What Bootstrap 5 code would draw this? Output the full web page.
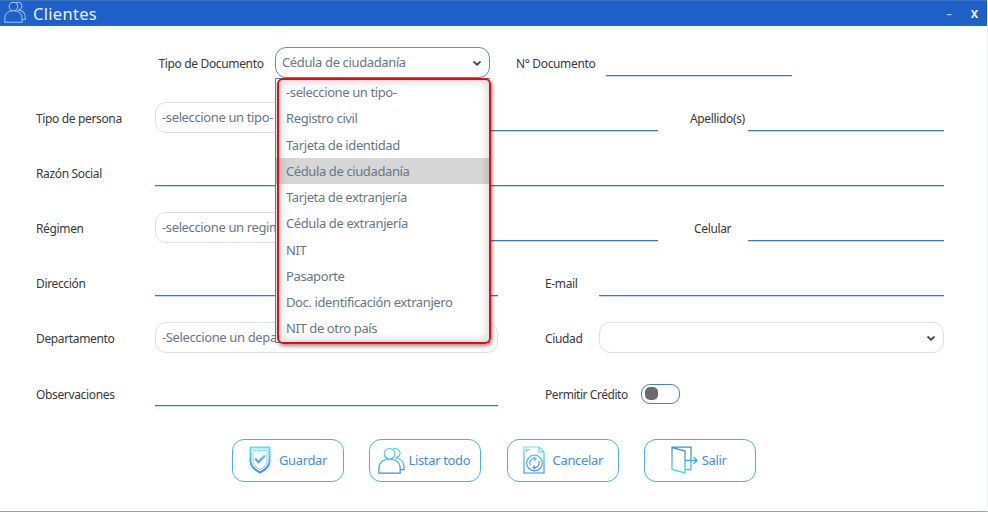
<!DOCTYPE html>
<html lang="es">
<head>
<meta charset="utf-8">
<title>Clientes</title>
<meta name="viewport" content="width=device-width, initial-scale=1">
<link href="https://cdn.jsdelivr.net/npm/bootstrap@5.3.0/dist/css/bootstrap.min.css" rel="stylesheet">
<style>
body{font-family:"Noto Sans","Open Sans",sans-serif;background:#fff;color:#222;overflow:hidden}
.win{width:988px;height:512px;border-right:1px solid #eef0f4;border-bottom:1.5px solid #8ba3d8}
.titlebar{height:26px;background:#1f5fc8;border-top:1px solid #3f6fc0;border-bottom:1px solid #3c66a8;color:#e9f2ff;padding:0 9px 0 4px}
.titlebar h1{font-size:16.5px;line-height:25px;letter-spacing:.3px;margin:0 0 0 7px;font-weight:400}
.winbtn{font:bold 11px/24px "Noto Sans",sans-serif;padding:0;border:0;background:none;color:#f2f7ff}
.winbtn.min{color:#a9c4ee;padding:1px 3px 0 0}
.form-area{padding:21px 43px 0 36px}
.line{height:31px;margin-bottom:24.1px;position:relative}
.lbl{font-size:12px;line-height:31px;padding-top:1px;white-space:nowrap;flex:none;color:#383838;letter-spacing:-.35px}
.w-lbl{width:119px}
.lbl-doc{width:239px;padding-left:122.5px}
.lbl-num{width:116px;padding-left:26px}
.lbl-ap{width:58px}.lbl-cel{width:54px}
.lbl-mid{width:101px;padding-left:47px}
.lbl-cred{width:143px;padding-left:47px;letter-spacing:-.45px}
.uline{border:0;border-bottom:1px solid #4079b0;box-shadow:0 1px 0 #c4dcf0;height:28.5px;padding:0;border-radius:0;background:none;outline:0;flex:none;min-width:0}
.sel{height:31px;border:1px solid #dbe2e6;border-radius:11px;padding:0 7px 0 6px;color:#697785;font-size:13px;letter-spacing:-.37px;line-height:29px;white-space:nowrap;overflow:hidden;flex:none;background:#fff}
.sel.active{border-color:#5b8cc4}
.w215{width:215px}.w343{width:343px}.w345{width:345px}.w186{width:186px}.w196{width:196px}.w256{width:256px}.w789{width:789px}.w155{width:156px}
.drop{position:absolute;left:239px;top:31px;width:215px;height:265px;z-index:5}
.lists{height:265px;background:#fff;border:1px solid #4d8fb8;border-right:0;padding:0;margin:0;list-style:none}
.lists li{height:26.25px;line-height:26px;font-size:13px;letter-spacing:-.39px;color:#697785;padding-left:10px;white-space:nowrap}
.lists li.on{background:#d6d6d6}
.redbox{position:absolute;left:2px;top:0;width:214px;height:266px;border:2.5px solid #f00610;border-radius:6px;box-shadow:1px 2px 4px rgba(0,0,0,.45),inset 0 0 9px 2px rgba(0,0,0,.16)}
.toggle{width:39px;height:20px;border:1px solid #4a7fc0;border-radius:9px;padding:2.5px 3px;flex:none;margin-top:6px}
.knob{width:13px;height:13px;border-radius:5px;background:#6b6b6b}
.actions{gap:25.4px;padding:6.3px 0 0 196px}
.act{width:112px;height:43px;border:1.3px solid #4fb0dc;border-radius:12px;color:#4a8de0;background:#fff;font-size:13px;letter-spacing:-.35px;padding:0;flex:none}
.act span{padding-top:1px}
.act svg{stroke:url(#g);fill:none}
.act.wide{padding-right:3px}
svg{display:block;flex:none}
</style>
</head>
<body>
<svg width="0" height="0" class="position-absolute" aria-hidden="true">
<defs>
<linearGradient id="g" gradientUnits="userSpaceOnUse" x1="0" y1="0" x2="0" y2="28"><stop offset="0" stop-color="#62e6e6"/><stop offset="1" stop-color="#4088dc"/></linearGradient>
<linearGradient id="h" gradientUnits="userSpaceOnUse" x1="8" y1="28" x2="14" y2="0"><stop offset="0" stop-color="#50dce4"/><stop offset="1" stop-color="#4088dc"/></linearGradient>
<symbol id="people" viewBox="0 0 28 28"><path d="M6.500 7a5.500 5.500 0 1 0 11 0a5.500 5.500 0 1 0-11 0M1 27V22C1 16.500 5 12.500 12 12.500S23 16.500 23 22V27ZM15 2.500A4.900 4.900 0 1 1 18 11.300M18.500 11.500C24 12 27 16 27 21V23.500H23.500"/></symbol>
</defs>
</svg>
<div class="win">
<header class="titlebar d-flex align-items-start">
<svg width="22" height="22" stroke="#9cc4f2" stroke-width="1.3" fill="none"><use href="#people"/></svg>
<h1>Clientes</h1>
<div class="ms-auto d-flex"><button class="winbtn min">–</button><button class="winbtn ms-3">X</button></div>
</header>
<main class="form-area">
<div class="line d-flex">
<label class="lbl lbl-doc">Tipo de Documento</label>
<div class="sel active w215 d-flex align-items-center justify-content-between"><span>Cédula de ciudadanía</span><svg width="10" height="8" viewBox="0 0 10 8" fill="none" stroke="#3f5268" stroke-width="2"><path d="M1.500 2.500 5 5.700 8.500 2.500"/></svg></div>
<label class="lbl lbl-num">N° Documento</label>
<input class="uline w186">
<div class="drop">
<ul class="lists">
<li>-seleccione un tipo-</li><li>Registro civil</li><li>Tarjeta de identidad</li><li class="on">Cédula de ciudadanía</li><li>Tarjeta de extranjería</li><li>Cédula de extranjería</li><li>NIT</li><li>Pasaporte</li><li>Doc. identificación extranjero</li><li>NIT de otro país</li>
</ul>
<div class="redbox"></div>
</div>
</div>
<div class="line d-flex">
<label class="lbl w-lbl">Tipo de persona</label><div class="sel w155">-seleccione un tipo-</div>
<input class="uline w256 ms-auto me-4"><label class="lbl lbl-ap ms-2">Apellido(s)</label><input class="uline w196">
</div>
<div class="line d-flex"><label class="lbl w-lbl">Razón Social</label><input class="uline w789"></div>
<div class="line d-flex">
<label class="lbl w-lbl">Régimen</label><div class="sel w155">-seleccione un regim</div>
<input class="uline w256 ms-auto me-4"><label class="lbl lbl-ap ms-2 ps-1">Celular</label><input class="uline w196">
</div>
<div class="line d-flex">
<label class="lbl w-lbl">Dirección</label><input class="uline w343"><label class="lbl lbl-mid">E-mail</label><input class="uline w345">
</div>
<div class="line d-flex">
<label class="lbl w-lbl">Departamento</label><div class="sel w343">-Seleccione un depa</div><label class="lbl lbl-mid">Ciudad</label>
<div class="sel w345 d-flex align-items-center justify-content-end"><svg width="10" height="8" viewBox="0 0 10 8" fill="none" stroke="#3f5268" stroke-width="2"><path d="M1.500 2.500 5 5.700 8.500 2.500"/></svg></div>
</div>
<div class="line d-flex">
<label class="lbl w-lbl">Observaciones</label><input class="uline w343"><label class="lbl lbl-cred">Permitir Crédito</label>
<div class="toggle"><div class="knob"></div></div>
</div>
<div class="actions d-flex">
<button class="act d-flex align-items-center justify-content-center gap-2"><svg width="22" height="28" viewBox="0 0 22 28"><path d="M1.500 1.500H20.500V15C20.500 21 16 24 11 26.500C6 24 1.500 21 1.500 15Z" stroke-width="2"/><path d="M4 4.500H18V14.500C18 19 15 21.500 11 23.500C7 21.500 4 19 4 14.500Z" stroke-width=".7"/><path d="M6 12.500 9.500 16 16 9.500" stroke-width="2.300"/></svg><span>Guardar</span></button>
<button class="act wide d-flex align-items-center justify-content-center gap-1"><svg width="27" height="27" stroke-width="1.3"><use href="#people"/></svg><span>Listar todo</span></button>
<button class="act d-flex align-items-center justify-content-center gap-2"><svg width="22" height="28" viewBox="0 0 22 28" stroke-width="1.200"><path d="M1 1H16L21 6V27H1ZM16 1V6H21M3.500 6V3.500H7"/><circle cx="11.500" cy="17" r="7.800"/><path d="M7.300 19A4.500 4.500 0 0 1 12.500 12.600M10.700 11 12.800 12.600 11.200 14.600M15.700 15A4.500 4.500 0 0 1 10.500 21.400M12.300 23 10.200 21.400 11.800 19.400"/></svg><span>Cancelar</span></button>
<button class="act wide d-flex align-items-center justify-content-center gap-1"><svg width="27" height="28" viewBox="0 0 27 28" stroke-width="1.300"><g stroke="url(#h)"><path d="M1 1.500 14 5V27L1 23.500ZM1 1.200H20V11M20 18V23.500H14M14 14.510 26 14.500M22.500 11 26 14.500 22.500 18M20 11V18"/></g></svg><span>Salir</span></button>
</div>
</main>
</div>
</body>
</html>
